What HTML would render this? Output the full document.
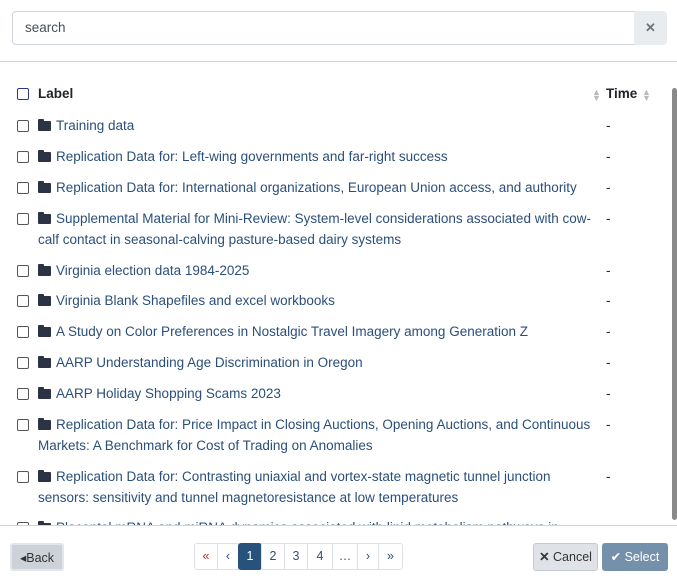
<!DOCTYPE html>
<html><head><style>
*{box-sizing:border-box}
body{margin:0;width:677px;height:583px;overflow:hidden;background:#fff;font-family:"Liberation Sans",sans-serif;font-size:13.5px;color:#212529;position:relative}
.search{position:absolute;left:12px;top:11px;width:623px;height:34px;border:1px solid #ced4da;border-radius:4px 0 0 4px;padding:0 12px;line-height:32px;color:#495057;font-size:13.5px}
.clr{position:absolute;left:634px;top:11px;width:33px;height:34px;background:#e9ecef;border-radius:0 4px 4px 0;color:#6c757d;font-weight:bold;text-align:center;line-height:33px;font-size:13px}
.sep{position:absolute;left:0;top:61px;width:677px;height:1px;background:#cfd4da}
.list{position:absolute;left:0;top:62px;width:671px;height:463px;overflow:hidden}
.thumb{position:absolute;left:672px;top:88px;width:5px;height:432px;background:#8a8a8a;border-radius:3px}
.row{position:absolute;left:0;width:671px;line-height:21px}
.cb{position:absolute;left:17px;top:5px;width:12px;height:12px;border:1.5px solid #555;border-radius:2px}
.lab{position:absolute;left:38px;width:556px;color:#2b4f7a}
.fold{display:inline-block;width:13px;height:10px;background:#2c3345;border-radius:1px;margin-right:5px;vertical-align:-1px;position:relative}
.fold:before{content:"";position:absolute;left:0;top:-2px;width:6px;height:3px;background:#2c3345;border-radius:1px 1px 0 0}
.t{position:absolute;left:606px}
.hdr{font-weight:bold}
.sort{position:absolute;color:#bbb;font-size:9px;line-height:6px}
.bot{position:absolute;left:0;top:525px;width:677px;height:1px;background:#cfd4da}
.btn{position:absolute;top:543px;height:28px;border-radius:3px;line-height:26px;font-size:12.5px;text-align:center}
.pg{position:absolute;top:543px;height:27px;border:1px solid #dee2e6;line-height:25px;text-align:center;color:#2b4f7a;font-size:12.5px;background:#fff}
</style></head><body>
<div class="search">search</div><div class="clr">✕</div>
<div class="sep"></div>
<div class="list">
<div class="row hdr" style="top:21px"><div class="cb" style="border-color:#2a3a8a"></div><div class="lab" style="color:#212529">Label</div>
<div class="sort" style="left:592px;top:6px">▲<br>▼</div><div class="t">Time</div><div class="sort" style="left:642px;top:6px">▲<br>▼</div></div>
<div class="row" style="top:53px"><div class="cb"></div><div class="lab"><span class="fold"></span>Training data</div><div class="t">-</div></div>
<div class="row" style="top:84px"><div class="cb"></div><div class="lab"><span class="fold"></span>Replication Data for: Left-wing governments and far-right success</div><div class="t">-</div></div>
<div class="row" style="top:115px"><div class="cb"></div><div class="lab"><span class="fold"></span>Replication Data for: International organizations, European Union access, and authority</div><div class="t">-</div></div>
<div class="row" style="top:146px"><div class="cb"></div><div class="lab"><span class="fold"></span>Supplemental Material for Mini-Review: System-level considerations associated with cow-<br>calf contact in seasonal-calving pasture-based dairy systems</div><div class="t">-</div></div>
<div class="row" style="top:198px"><div class="cb"></div><div class="lab"><span class="fold"></span>Virginia election data 1984-2025</div><div class="t">-</div></div>
<div class="row" style="top:228px"><div class="cb"></div><div class="lab"><span class="fold"></span>Virginia Blank Shapefiles and excel workbooks</div><div class="t">-</div></div>
<div class="row" style="top:259px"><div class="cb"></div><div class="lab"><span class="fold"></span>A Study on Color Preferences in Nostalgic Travel Imagery among Generation Z</div><div class="t">-</div></div>
<div class="row" style="top:290px"><div class="cb"></div><div class="lab"><span class="fold"></span>AARP Understanding Age Discrimination in Oregon</div><div class="t">-</div></div>
<div class="row" style="top:321px"><div class="cb"></div><div class="lab"><span class="fold"></span>AARP Holiday Shopping Scams 2023</div><div class="t">-</div></div>
<div class="row" style="top:352px"><div class="cb"></div><div class="lab"><span class="fold"></span>Replication Data for: Price Impact in Closing Auctions, Opening Auctions, and Continuous<br>Markets: A Benchmark for Cost of Trading on Anomalies</div><div class="t">-</div></div>
<div class="row" style="top:404px"><div class="cb"></div><div class="lab"><span class="fold"></span>Replication Data for: Contrasting uniaxial and vortex-state magnetic tunnel junction<br>sensors: sensitivity and tunnel magnetoresistance at low temperatures</div><div class="t">-</div></div>
<div class="row" style="top:455px"><div class="cb"></div><div class="lab"><span class="fold"></span>Placental mRNA and miRNA dynamics associated with lipid metabolism pathways in</div><div class="t">-</div></div>
</div>
<div class="thumb"></div>
<div class="bot"></div>
<div class="btn" style="left:10px;width:54px;background:#ccd2d8;border:2px solid #e2e6ea;color:#333">◂Back</div>
<div class="pg" style="left:194px;width:24px;border-radius:3px 0 0 3px;color:#b03030">«</div>
<div class="pg" style="left:217px;width:22px">‹</div>
<div class="pg" style="left:238px;width:24px;background:#26527c;color:#fff;border-color:#26527c;border-radius:3px">1</div>
<div class="pg" style="left:261px;width:24px">2</div>
<div class="pg" style="left:284px;width:24px">3</div>
<div class="pg" style="left:307px;width:26px">4</div>
<div class="pg" style="left:332px;width:26px">…</div>
<div class="pg" style="left:357px;width:22px">›</div>
<div class="pg" style="left:378px;width:25px;border-radius:0 3px 3px 0">»</div>
<div class="btn" style="left:533px;width:65px;background:#dfe2e6;border:1px solid #c5cad0;color:#333"><b>✕</b> Cancel</div>
<div class="btn" style="left:602px;width:66px;background:#7590aa;border:1px solid #7590aa;color:#fff">✔ Select</div>
</body></html>
